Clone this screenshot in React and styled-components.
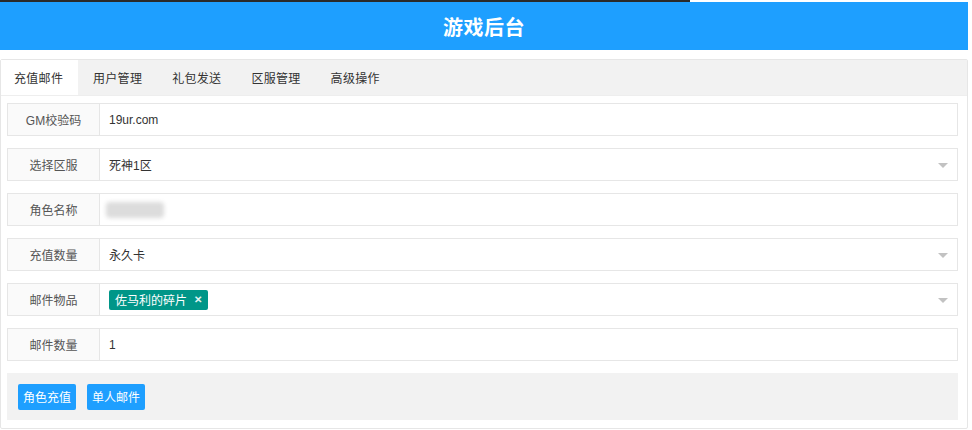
import React from "react";
import styled, { createGlobalStyle } from "styled-components";

const GlobalStyle = createGlobalStyle`
  html, body { margin: 0; padding: 0; background: #fff; }
  body {
    font-family: "Liberation Sans", "Noto Sans CJK SC", sans-serif;
    font-size: 12px;
    color: #333;
  }
`;

const Page = styled.div`
  width: 972px;
  height: 430px;
  overflow: hidden;
`;

const TopLine = styled.div`
  width: 690px;
  height: 2px;
  background: #2a2a2a;
`;

const Header = styled.header`
  width: 968px;
  height: 48px;
  background: #1e9fff;
  color: #fff;
  display: flex;
  align-items: center;
  justify-content: center;
  font-size: 20px;
  font-weight: bold;
  letter-spacing: 0.5px;
`;

const Card = styled.section`
  margin-top: 9px;
  width: 966px;
  border: 1px solid #e6e6e6;
  border-radius: 2px;
`;

const TabBar = styled.ul`
  list-style: none;
  margin: 0;
  padding: 0;
  height: 35px;
  display: flex;
  background: #f2f2f2;
  border-bottom: 1px solid #eee;
`;

const Tab = styled.li`
  height: 35px;
  box-sizing: border-box;
  padding: ${(p) => (p.$active ? "0 0 0 13px" : "0 15px")};
  width: ${(p) => (p.$active ? "77px" : "auto")};
  display: flex;
  align-items: center;
  white-space: nowrap;
  font-size: 12px;
  letter-spacing: 0.3px;
  color: #333;
  background: ${(p) => (p.$active ? "#fff" : "transparent")};
`;

const Body = styled.div`
  padding: 7px 9px 8px 6px;
  display: flex;
  flex-direction: column;
  gap: 12px;
`;

const Row = styled.div`
  display: flex;
  height: 33px;
`;

const Label = styled.label`
  width: 93px;
  flex: none;
  box-sizing: border-box;
  border: 1px solid #e6e6e6;
  background: #fafafa;
  display: flex;
  align-items: center;
  justify-content: center;
  color: #555;
  font-size: 12px;
`;

const Field = styled.div`
  flex: 1;
  position: relative;
  box-sizing: border-box;
  border: 1px solid #e6e6e6;
  border-left: none;
  display: flex;
  align-items: center;
  padding-left: 9px;
  font-size: 12px;
  color: #333;
`;

const Arrow = styled.span`
  position: absolute;
  right: 9px;
  top: 14px;
  width: 0;
  height: 0;
  border-left: 5px solid transparent;
  border-right: 5px solid transparent;
  border-top: 5px solid #c2c2c2;
`;

const Blurred = styled.span`
  display: inline-block;
  width: 58px;
  height: 16px;
  margin-left: -3px;
  border-radius: 4px;
  background: #dcdcdc;
  filter: blur(2px);
`;

const Tag = styled.span`
  display: inline-flex;
  align-items: center;
  height: 20px;
  padding: 0 6px;
  background: #009688;
  color: #fff;
  font-size: 12px;
  border-radius: 2px;
  gap: 7px;
`;

const Close = styled.span`
  font-size: 10px;
  font-weight: bold;
  color: #e0f2f1;
`;

const Actions = styled.div`
  background: #f2f2f2;
  height: 47px;
  padding: 0 11px;
  display: flex;
  align-items: center;
  gap: 11px;
`;

const Button = styled.button`
  height: 26px;
  width: 58px;
  padding: 0;
  white-space: nowrap;
  border: none;
  border-radius: 2px;
  background: #1e9fff;
  color: #fff;
  font-family: inherit;
  font-size: 12px;
`;

const tabs = ["充值邮件", "用户管理", "礼包发送", "区服管理", "高级操作"];

export default function App() {
  return (
    <Page>
      <GlobalStyle />
      <TopLine />
      <Header>游戏后台</Header>
      <Card>
        <TabBar>
          {tabs.map((t, i) => (
            <Tab key={t} $active={i === 0}>
              {t}
            </Tab>
          ))}
        </TabBar>
        <Body>
          <Row>
            <Label>GM校验码</Label>
            <Field>19ur.com</Field>
          </Row>
          <Row>
            <Label>选择区服</Label>
            <Field>
              死神1区
              <Arrow />
            </Field>
          </Row>
          <Row>
            <Label>角色名称</Label>
            <Field>
              <Blurred />
            </Field>
          </Row>
          <Row>
            <Label>充值数量</Label>
            <Field>
              永久卡
              <Arrow />
            </Field>
          </Row>
          <Row>
            <Label>邮件物品</Label>
            <Field>
              <Tag>
                佐马利的碎片<Close>✕</Close>
              </Tag>
              <Arrow />
            </Field>
          </Row>
          <Row>
            <Label>邮件数量</Label>
            <Field>1</Field>
          </Row>
          <Actions>
            <Button>角色充值</Button>
            <Button>单人邮件</Button>
          </Actions>
        </Body>
      </Card>
    </Page>
  );
}
